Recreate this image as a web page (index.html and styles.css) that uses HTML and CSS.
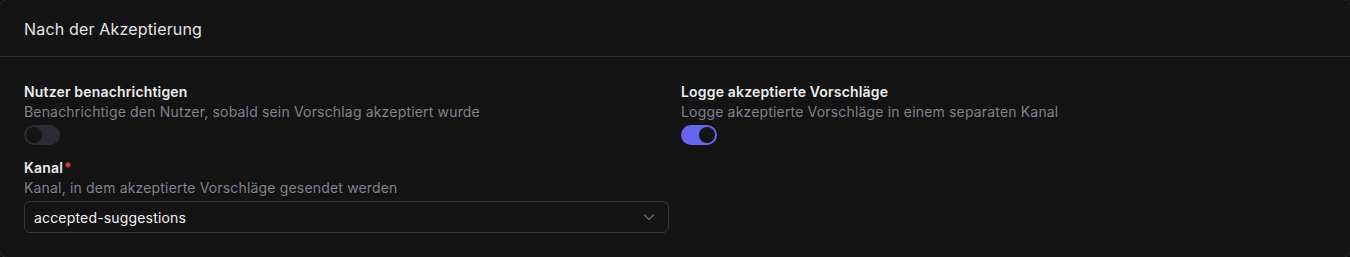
FILE: index.html
```html
<!DOCTYPE html>
<html lang="de">
<head>
<meta charset="utf-8">
<link rel="stylesheet" href="styles.css">
</head>
<body>
<section class="card">
  <header class="card-header">Nach der Akzeptierung</header>
  <div class="card-body">
    <div class="grid">
      <div class="field">
        <div class="label">Nutzer benachrichtigen</div>
        <div class="desc">Benachrichtige den Nutzer, sobald sein Vorschlag akzeptiert wurde</div>
        <div class="toggle"><span class="knob"></span></div>
      </div>
      <div class="field">
        <div class="label">Logge akzeptierte Vorschläge</div>
        <div class="desc">Logge akzeptierte Vorschläge in einem separaten Kanal</div>
        <div class="toggle on"><span class="knob"></span></div>
      </div>
      <div class="field">
        <div class="label">Kanal<span class="req">*</span></div>
        <div class="desc">Kanal, in dem akzeptierte Vorschläge gesendet werden</div>
        <div class="select">
          <span>accepted-suggestions</span>
          <svg width="16" height="16" viewBox="0 0 16 16" fill="none"><path d="M3.5 6 L8 10.5 L12.5 6" stroke="#5e6068" stroke-width="1.5" stroke-linecap="round" stroke-linejoin="round"/></svg>
        </div>
      </div>
    </div>
  </div>
</section>
</body>
</html>
```
FILE: styles.css
```css
html, body {
  margin: 0;
  padding: 0;
  background: #0c0c0c;
  height: 100%;
}
body {
  font-family: Inter, "Noto Sans", sans-serif;
  letter-spacing: 0.17px;
  overflow: hidden;
}
.card {
  margin: -1px;
  height: calc(100% + 2px);
  box-sizing: border-box;
  background: #131313;
  border: 1px solid #2a2a2a;
  border-radius: 8px;
}
.card-header {
  height: 57px;
  box-sizing: border-box;
  padding: 19px 24px 0 24px;
  font-size: 16px;
  line-height: 20px;
  color: #e4e4e4;
  border-bottom: 1px solid #2d2d2d;
}
.card-body {
  padding: 25px 24px 24px 24px;
}
.grid {
  display: grid;
  grid-template-columns: 1fr 1fr;
  column-gap: 12px;
  row-gap: 13px;
}
.field {
  display: flex;
  flex-direction: column;
}
.label {
  font-size: 14px;
  line-height: 20px;
  font-weight: 600;
  color: #ececec;
}
.req {
  color: #e5484d;
  margin-left: 1px;
}
.desc {
  font-size: 14px;
  line-height: 20px;
  color: #7e818a;
}
.toggle {
  margin-top: 3px;
  width: 36px;
  height: 20px;
  border-radius: 10px;
  background: #2b2d32;
  display: flex;
  align-items: center;
  padding: 2px;
  box-sizing: border-box;
}
.knob {
  width: 16px;
  height: 16px;
  border-radius: 50%;
  background: #141414;
  box-sizing: border-box;
}
.toggle.on {
  background: #6766f0;
  justify-content: flex-end;
}
.select {
  margin-top: 3px;
  height: 32px;
  box-sizing: border-box;
  border: 1px solid #34353a;
  border-radius: 6px;
  display: flex;
  align-items: center;
  justify-content: space-between;
  padding: 0 11px 0 9px;
  font-size: 14px;
  color: #f2f2f2;
}
```
